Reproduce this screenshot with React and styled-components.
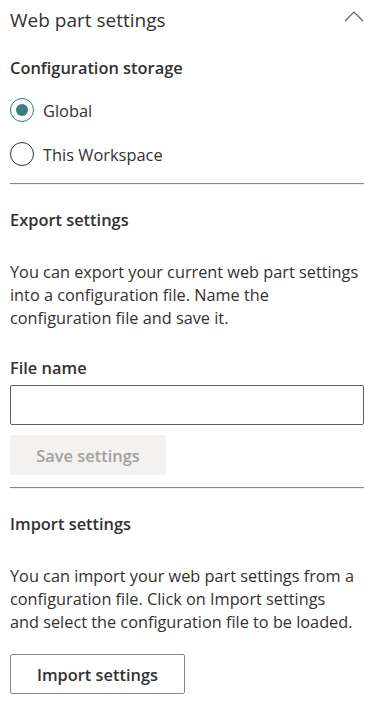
import React, { useState } from "react";
import styled, { createGlobalStyle } from "styled-components";

const GlobalStyle = createGlobalStyle`
  html, body {
    margin: 0;
    padding: 0;
    background: #ffffff;
  }
  body {
    font-family: "Open Sans", "Noto Sans", sans-serif;
    color: #323130;
  }
`;

const Panel = styled.div`
  width: 374px;
  padding: 0 10px;
  box-sizing: border-box;
`;

const Header = styled.div`
  height: 40px;
  display: flex;
  align-items: center;
  justify-content: space-between;
`;

const HeaderTitle = styled.div`
  font-size: 19px;
  color: #323130;
`;

const Chevron = styled.svg`
  width: 20px;
  height: 12px;
  margin-top: -8px;
`;

const SectionTitle = styled.div`
  font-size: 16.4px;
  font-weight: 600;
  line-height: 22px;
  margin: ${(p) => p.$margin || "0"};
`;

const RadioRow = styled.label`
  display: flex;
  align-items: center;
  gap: 9px;
  height: 24px;
  margin-top: ${(p) => p.$top || "0"};
  font-size: 16.4px;
  cursor: pointer;
`;

const RadioCircle = styled.span`
  width: 24px;
  height: 24px;
  box-sizing: border-box;
  border-radius: 50%;
  border: 1.5px solid ${(p) => (p.$checked ? "#2e7c82" : "#323130")};
  display: flex;
  align-items: center;
  justify-content: center;
  &::after {
    content: "";
    width: 12px;
    height: 12px;
    border-radius: 50%;
    background: #3a7d83;
    display: ${(p) => (p.$checked ? "block" : "none")};
  }
`;

const Divider = styled.div`
  height: 1px;
  background: #8a8886;
  border-bottom: 1px solid #f3f2f1;
  margin: ${(p) => p.$margin || "0"};
`;

const Paragraph = styled.p`
  margin: ${(p) => p.$margin || "0"};
  font-size: 16.3px;
  line-height: 23px;
  color: #323130;
`;

const Input = styled.input`
  display: block;
  width: 100%;
  height: 40px;
  box-sizing: border-box;
  border: 1px solid #605e5c;
  border-radius: 2px;
  margin-top: 6px;
  font-size: 15px;
  padding: 0 8px;
  outline: none;
`;

const Button = styled.button`
  display: block;
  height: 40px;
  width: ${(p) => p.$width};
  border-radius: 2px;
  font-family: inherit;
  font-size: 16.4px;
  font-weight: 600;
  margin-top: ${(p) => p.$top || "0"};
  background: ${(p) => (p.disabled ? "#f3f2f1" : "#ffffff")};
  color: ${(p) => (p.disabled ? "#a19f9d" : "#323130")};
  border: 1px solid ${(p) => (p.disabled ? "#f3f2f1" : "#8a8886")};
  cursor: ${(p) => (p.disabled ? "default" : "pointer")};
`;

export default function App() {
  const [storage, setStorage] = useState("global");

  return (
    <>
      <GlobalStyle />
      <Panel>
        <Header>
          <HeaderTitle>Web part settings</HeaderTitle>
          <Chevron viewBox="0 0 20 12">
            <path d="M1 11 L10 2 L19 11" fill="none" stroke="#605e5c" strokeWidth="1.2" />
          </Chevron>
        </Header>

        <SectionTitle $margin="17px 0 0">Configuration storage</SectionTitle>

        <RadioRow $top="19px" onClick={() => setStorage("global")}>
          <RadioCircle $checked={storage === "global"} />
          Global
        </RadioRow>
        <RadioRow $top="20px" onClick={() => setStorage("workspace")}>
          <RadioCircle $checked={storage === "workspace"} />
          This Workspace
        </RadioRow>

        <Divider $margin="17px 0 0" />

        <SectionTitle $margin="24px 0 0">Export settings</SectionTitle>
        <Paragraph $margin="30px 0 0">
          You can export your current web part settings into a configuration
          file. Name the configuration file and save it.
        </Paragraph>

        <SectionTitle $margin="27px 0 0">File name</SectionTitle>
        <Input type="text" />
        <Button disabled $width="156px" $top="10px">
          Save settings
        </Button>

        <Divider $margin="12px 0 0" />

        <SectionTitle $margin="24px 0 0">Import settings</SectionTitle>
        <Paragraph $margin="30px 0 0">
          You can import your web part settings from a configuration file.
          Click on Import settings
          <br />
          and select the configuration file to be loaded.
        </Paragraph>
        <Button $width="175px" $top="20px">
          Import settings
        </Button>
      </Panel>
    </>
  );
}
